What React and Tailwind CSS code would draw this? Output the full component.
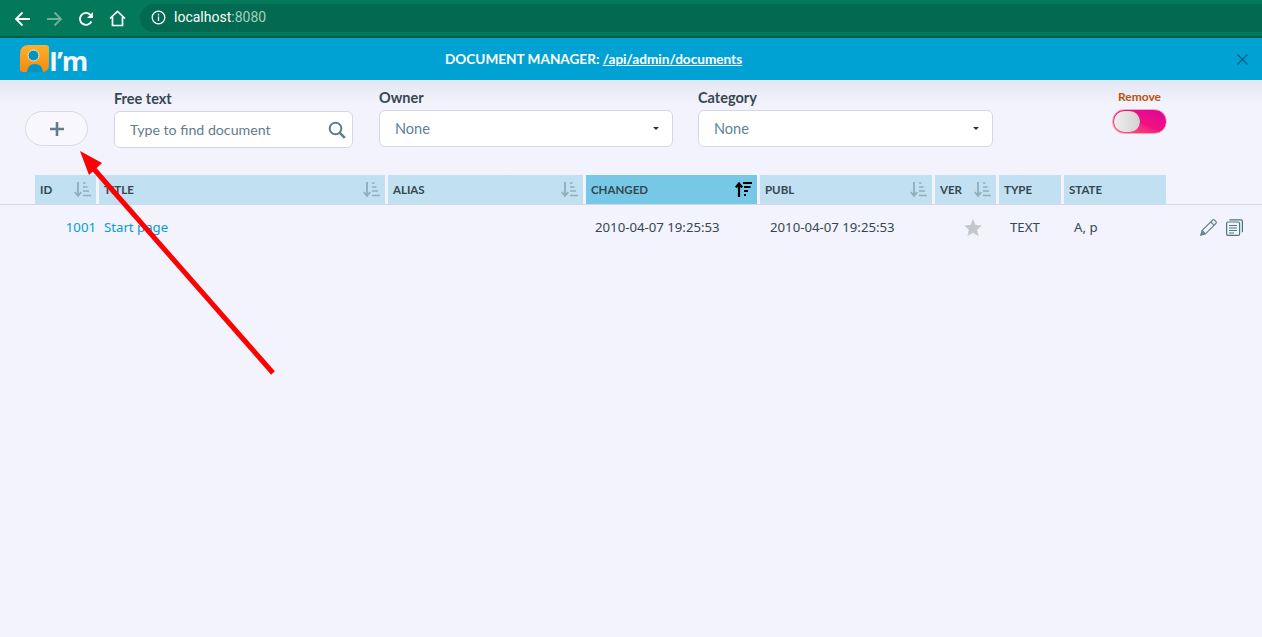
// Document manager page with the browser bar above it

const columns = [
  { label: "ID", width: "w-[61px]", sort: true },
  { label: "TITLE", width: "w-[286px]", sort: true },
  { label: "ALIAS", width: "w-[195px]", sort: true },
  { label: "CHANGED", width: "w-[171px]", sort: true, active: true },
  { label: "PUBL", width: "w-[172px]", sort: true },
  { label: "VER", width: "w-[61px]", sort: true },
  { label: "TYPE", width: "w-[62px]" },
  { label: "STATE", width: "w-[102px]" },
];

// Sort icon with the short line on top
function SortIcon() {
  return (
    <svg width="17" height="15" viewBox="0 0 17 15" fill="none" stroke="#93adba" strokeWidth="1.5">
      <path d="M4 0v13.5M.8 10l3.2 4 3.2-4" strokeWidth="1.8" />
      <path d="M9 1h2.5M9 5h4.5M9 9h6M9 13.5h8" />
    </svg>
  );
}

// Sort icon of the active column
function SortActiveIcon() {
  return (
    <svg width="17" height="15" viewBox="0 0 17 15" fill="none" stroke="#000" strokeWidth="1.8">
      <path d="M4 15V2M.8 5.5L4 1.5l3.2 4" strokeWidth="2.2" />
      <path d="M8 1h9M9 5h6.5M9 9h4M9 13h2" />
    </svg>
  );
}

function Select({ label, width }) {
  return (
    <div className={`${width} flex flex-col`}>
      <span className="text-[14.5px] leading-[17px] font-bold text-[#37474f] mb-[4px]">{label}</span>
      <div className="h-[37px] bg-white border border-[#d5d8e4] rounded-[6px] pl-[15px] pr-[13px] flex items-center justify-between">
        <span className="text-[14.5px] text-[#5d8297]">None</span>
        <span className="w-0 h-0 border-x-[3px] border-x-transparent border-t-[3px] border-t-[#263238]"></span>
      </div>
    </div>
  );
}

function Logo() {
  return (
    <div className="w-[69px] flex items-end h-[28px] select-none">
      <svg width="30" height="28" viewBox="0 0 30 28">
        <defs>
          <linearGradient id="logoOrange" x1="0" y1="0" x2="0" y2="1">
            <stop offset="0" stopColor="#fbb02d" />
            <stop offset="1" stopColor="#f58a0c" />
          </linearGradient>
        </defs>
        <path d="M9 0H26Q29 0 29 3V20Q29 26 23 27C22 21 20 19 15 19S8 21 7 27H3Q0 27 0 24V9Q0 0 9 0Z" fill="url(#logoOrange)" />
        <circle cx="13.5" cy="10.5" r="5.5" fill="#0793c0" stroke="#ffe9c4" strokeWidth="1" />
        <path d="M8 27C8 22 11 20 15 20S22 22 22 27Z" fill="#0793c0" />
      </svg>
      <span className="font-['Open_Sans',sans-serif] text-[27px] leading-[25px] font-bold text-[#f4f7f8] tracking-[-1px] ml-[-1px]">I’m</span>
    </div>
  );
}

export default function App() {
  return (
    <div className="relative h-[637px] overflow-hidden bg-[#f2f3fc] font-['Lato',sans-serif] text-[#37474f]">
      {/* Browser bar */}
      <div className="h-[38px] bg-[#04795a] border-b-2 border-[#035f49] flex items-center pl-[14px] pt-[1px]">
        <svg width="17" height="16" viewBox="0 0 17 16" fill="none" stroke="#fff" strokeWidth="1.8">
          <path d="M16 8H2M8.5 1.5L2 8l6.5 6.5" />
        </svg>
        <svg className="ml-[15px]" width="17" height="16" viewBox="0 0 17 16" fill="none" stroke="#6fb09a" strokeWidth="1.8">
          <path d="M1 8h14M8.5 1.5L15 8l-6.5 6.5" />
        </svg>
        <svg className="ml-[15px]" width="16" height="16" viewBox="0 0 16 16" fill="none" stroke="#fff" strokeWidth="1.9">
          <path d="M13.4 10.5A6 6 0 1 1 12.4 3.8L14.5 6" />
          <path d="M15 1v6H9" fill="#fff" stroke="none" />
        </svg>
        <svg className="ml-[15px]" width="17" height="17" viewBox="0 0 17 17" fill="none" stroke="#fff" strokeWidth="1.7">
          <path d="M1 8.5L8.5 1.5 16 8.5M3.5 7v8.5h10V7" />
        </svg>
        <div className="ml-[14px] flex-1 h-[28px] bg-[#026a50] rounded-l-[14px] flex items-center pl-[11px] mt-[-2px]">
          <svg width="15" height="15" viewBox="0 0 15 15" fill="none" stroke="#fff" strokeWidth="1.3">
            <circle cx="7.5" cy="7.5" r="6.3" />
            <path d="M7.5 6.5v4.5M7.5 3.8v1.6" />
          </svg>
          <span className="ml-[8px] text-[14px] font-['Roboto',sans-serif] text-white">
            localhost<span className="text-[#a9cdbf]">:8080</span>
          </span>
        </div>
      </div>

      {/* Application header */}
      <div className="h-[42px] bg-[#00a2d4] flex items-center pl-[20px] pr-[14px] text-white">
        <Logo />
        <div className="text-[13.6px] font-bold ml-[356px]">
          DOCUMENT MANAGER: <span className="underline">/api/admin/documents</span>
        </div>
        <svg className="ml-auto" width="11" height="11" viewBox="0 0 11 11" fill="none" stroke="#0b5f80" strokeWidth="1.1">
          <path d="M.5.5l10 10M10.5.5l-10 10" />
        </svg>
      </div>

      {/* Filters */}
      <div className="h-[95px] bg-gradient-to-b from-[#e4e6f3] to-[#f2f3fc] to-[25%] pl-[25px] flex items-start">
        <button className="mt-[31px] w-[63px] h-[35px] rounded-[18px] bg-[#f7f7fd] border border-[#d9dbe4] flex items-center justify-center">
          <svg width="14" height="14" viewBox="0 0 14 14" stroke="#607d8b" strokeWidth="2.6">
            <path d="M7 0v14M0 7h14" />
          </svg>
        </button>
        <div className="ml-[26px] mt-[10px] w-[239px] flex flex-col">
          <span className="text-[14.5px] leading-[17px] font-bold mb-[4px]">Free text</span>
          <div className="h-[37px] bg-white border border-[#d5d8e4] rounded-[6px] pl-[15px] pr-[6px] flex items-center justify-between">
            <span className="text-[14.2px] text-[#5f7d8c]">Type to find document</span>
            <svg width="18" height="18" viewBox="0 0 18 18" fill="none" stroke="#5f7d8c" strokeWidth="2">
              <circle cx="7.5" cy="7.5" r="5.8" />
              <path d="M11.8 11.8l5 5" strokeWidth="2.6" />
            </svg>
          </div>
        </div>
        <div className="ml-[26px] mt-[9px] flex gap-[25px]">
          <Select label="Owner" width="w-[294px]" />
          <Select label="Category" width="w-[295px]" />
        </div>
        <div className="ml-[119px] mt-[9px] w-[55px] flex flex-col items-center">
          <span className="text-[12px] leading-[16px] text-[#c2500c] font-bold whitespace-nowrap">Remove</span>
          <div className="mt-[4px] w-[55px] h-[25px] rounded-full bg-gradient-to-tr from-[#ff5577] via-[#f0107f] to-[#dc009c] border border-[#f8a5b5] p-[1px]">
            <div className="w-[26px] h-[21px] rounded-full bg-gradient-to-r from-[#efefef] to-[#d2d2d2]"></div>
          </div>
        </div>
      </div>

      {/* Table head */}
      <div className="h-[30px] border-b border-[#d5d8e2] pl-[35px] flex gap-[3px]">
        {columns.map((col) => (
          <div
            key={col.label}
            className={`${col.width} h-[29px] px-[5px] flex items-center justify-between ${col.active ? "bg-[#77c7e6]" : "bg-[#c1e0f2]"}`}
          >
            <span className="text-[11.5px] font-bold text-[#37474f]">{col.label}</span>
            {col.sort && (col.active ? <SortActiveIcon /> : <SortIcon />)}
          </div>
        ))}
      </div>

      {/* Row */}
      <div className="h-[45px] pl-[35px] flex gap-[3px] items-center text-[13.2px] font-['Noto_Sans',sans-serif]">
        <div className="w-[61px] text-right text-[#0a9bd6]">1001</div>
        <div className="w-[286px] pl-[5px] text-[#0a9bd6]">Start page</div>
        <div className="w-[195px]"></div>
        <div className="w-[171px] pl-[9px]">2010-04-07 19:25:53</div>
        <div className="w-[172px] pl-[10px]">2010-04-07 19:25:53</div>
        <div className="w-[61px] flex justify-center">
          <svg className="ml-[15px]" width="18" height="17" viewBox="0 0 24 23" fill="#c4c8cc">
            <path d="M12 0l3.5 8 8.5.8-6.4 5.7 1.9 8.5L12 18.5 4.5 23l1.9-8.5L0 8.8 8.5 8z" />
          </svg>
        </div>
        <div className="w-[62px] pl-[11px]">TEXT</div>
        <div className="w-[102px] pl-[10px]">A, p</div>
        <div className="ml-[31px] flex items-center gap-[9px]">
          <svg width="17" height="17" viewBox="0 0 17 17" fill="none" stroke="#6d8290" strokeWidth="1.2">
            <path d="M1 16l1.2-4.6L12.5 1.2a1.5 1.5 0 0 1 2.1 0l1.2 1.2a1.5 1.5 0 0 1 0 2.1L5.5 14.8z" />
            <path d="M10.8 3l3.2 3.2M2.2 11.4l3.3 3.4" />
            <path d="M1 16l1-3.4 2.4 2.4z" fill="#6d8290" />
          </svg>
          <svg width="17" height="17" viewBox="0 0 17 17" fill="none" stroke="#4d7486" strokeWidth="1.2">
            <rect x=".6" y="3" width="13" height="13.4" rx="1.5" />
            <path d="M3.5.8h11.5a1.5 1.5 0 0 1 1.4 1.5v11" />
            <path d="M3 6.5h8M3 9h8M3 11.5h8M3 14h5" />
          </svg>
        </div>
      </div>

      {/* Red arrow drawn over the page */}
      <svg className="absolute left-0 top-0 pointer-events-none" width="300" height="400" viewBox="0 0 300 400">
        <path d="M273 373L93 168" stroke="#ff0000" strokeWidth="5" fill="none" />
        <path d="M80 151L102 163 89 175Z" fill="#ff0000" />
      </svg>
    </div>
  );
}
